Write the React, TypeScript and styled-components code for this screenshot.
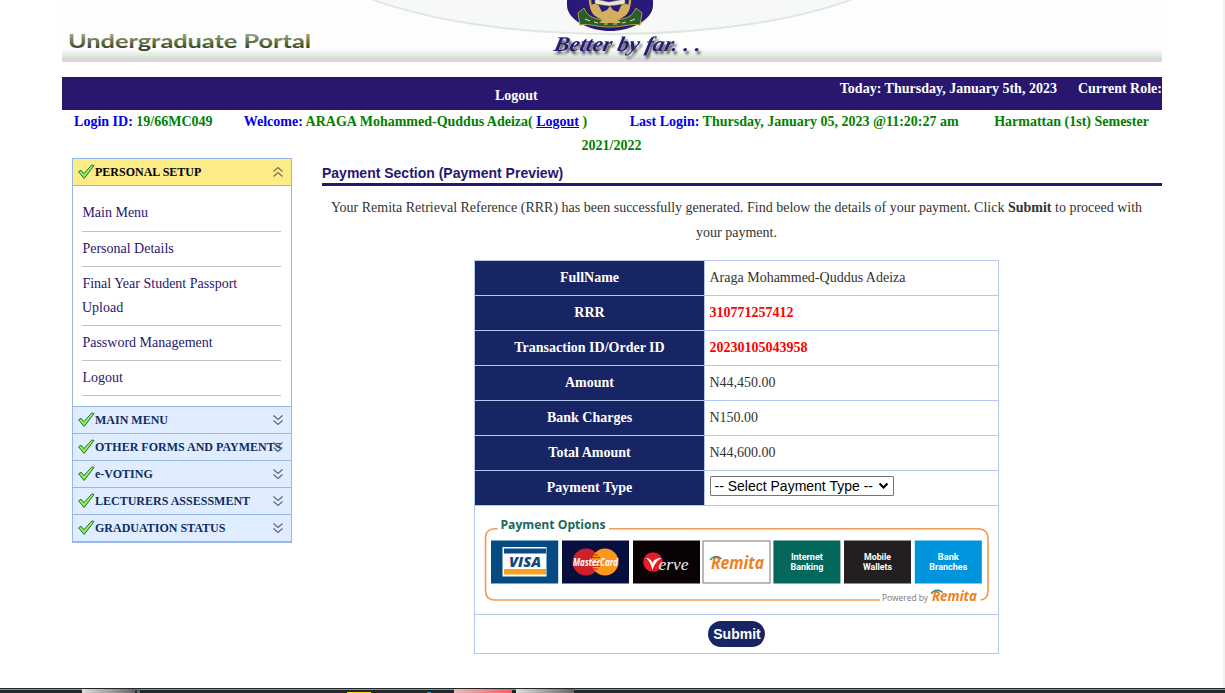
import React from "react";
import styled, { createGlobalStyle } from "styled-components";

const SERIF = '"Liberation Serif", "Times New Roman", serif';
const SANS = '"Liberation Sans", Arial, sans-serif';

const Global = createGlobalStyle`
  * { box-sizing: border-box; }
  html, body { margin: 0; padding: 0; background: #fff; overflow: hidden; }
  body { font-family: ${SERIF}; font-size: 14px; line-height: 24px; color: #333; }
`;

const Page = styled.div`
  display: flex;
  flex-direction: column;
  height: 693px;
  overflow: hidden;
`;
const Viewport = styled.div`
  display: flex;
  height: 688px;
  justify-content: space-between;
  padding-left: 62px;
`;
const ScrollTrack = styled.div`
  width: 2px;
  background: #f1f1f1;
`;
const Shell = styled.div`
  width: 1100px;
`;
const Banner = styled.header`
  height: 62px;
  border-bottom: 2px solid #e8cfe6;
  svg { display: block; }
`;
const Nav = styled.nav`
  display: flex;
  justify-content: space-between;
  margin-top: 15px;
  height: 33px;
  background: #28166f;
  color: #fff;
  font-weight: bold;
  white-space: nowrap;
`;
const NavLink = styled.a`
  margin-left: 433px;
  padding-top: 7px;
`;
const NavInfo = styled.div`
  display: flex;
  gap: 21px;
  line-height: 23px;
`;
const Session = styled.div`
  padding-right: 1px;
  text-align: center;
  font-weight: bold;
  color: #008000;
  height: 48px;
`;
const Entry = styled.span<{ $gap?: number }>`
  margin-right: ${(p) => p.$gap ?? 0}px;
`;
const Label = styled.span`
  color: #0000f0;
`;
const InlineLink = styled.a`
  color: #0000e0;
  text-decoration: underline;
`;
const Columns = styled.div`
  display: flex;
  justify-content: space-between;
  padding-left: 10px;
`;
const Sidebar = styled.aside`
  width: 220px;
  height: 385px;
  border: 1px solid #95b8e7;
  border-bottom-width: 2px;
`;
const PanelHead = styled.div<{ $open?: boolean }>`
  display: flex;
  align-items: center;
  justify-content: space-between;
  height: ${(p) => (p.$open ? 26 : 27)}px;
  padding: 0 7px 0 5px;
  background: ${(p) => (p.$open ? "#fbec88" : "#e0ecff")};
  color: ${(p) => (p.$open ? "#000" : "#0e2d5f")};
  border-top: ${(p) => (p.$open ? 0 : 1)}px solid #95b8e7;
  font-size: 12px;
  font-weight: bold;
  line-height: 16px;
  white-space: nowrap;
`;
const HeadLabel = styled.span`
  display: flex;
  align-items: center;
  width: 193px;
`;
const Icon = styled.svg`
  flex: none;
`;
const PanelBody = styled.div`
  height: 221px;
  border-top: 1px solid #95b8e7;
  padding: 9px 10px 0 9px;
`;
const MenuItem = styled.a`
  display: block;
  padding: 5px 0 5px;
  border-bottom: 1px solid #c0c0c0;
  color: #28166f;
  text-indent: 0.4px;
  &:first-child { padding: 6px 0 6px; }
`;
const Main = styled.main`
  width: 840px;
`;
const Title = styled.h1`
  margin: 0;
  padding-top: 3px;
  height: 28px;
  border-bottom: 3px solid #28166f;
  color: #28166f;
  font: bold 14px/24px ${SANS};
`;
const Notice = styled.p`
  margin: 9px 0 15px;
  padding: 0 11px 0 0;
  text-align: center;
  line-height: 25px;
`;
const Details = styled.div`
  width: 525px;
  margin-left: 152px;
  border: 1px solid #b3c6f2;
`;
const Row = styled.div`
  display: flex;
  height: 35px;
  border-bottom: 1px solid #b3c6f2;
`;
const RowHead = styled.div`
  width: 230px;
  border-right: 1px solid #b3c6f2;
  background: #182564;
  color: #fff;
  font-weight: bold;
  text-align: center;
  line-height: 33px;
`;
const RowValue = styled.div<{ $red?: boolean }>`
  padding-left: 4.5px;
  line-height: 33px;
  color: ${(p) => (p.$red ? "#f00" : "#333")};
  font-weight: ${(p) => (p.$red ? "bold" : "normal")};
`;
const Select = styled.div`
  display: flex;
  align-items: center;
  justify-content: space-between;
  width: 184px;
  height: 20px;
  margin-top: 5px;
  padding: 0 4px;
  border: 1px solid #767676;
  border-radius: 1px;
  color: #000;
  font: 14px/18px ${SANS};
  white-space: nowrap;
`;
const Options = styled.div`
  height: 109px;
  border-bottom: 1px solid #b3c6f2;
  svg { display: block; }
`;
const Actions = styled.div`
  display: flex;
  height: 38px;
  padding-top: 6px;
  justify-content: center;
`;
const Submit = styled.button`
  width: 57px;
  height: 26px;
  padding: 0 0 0 1px;
  border: 0;
  border-radius: 13px;
  background: #182564;
  color: #fff;
  font: bold 14px ${SANS};
`;
const Taskbar = styled.footer`
  height: 5px;
  svg { display: block; }
`;

const Check = () => (
  <Icon width="17" height="16" viewBox="0 0 17 16">
    <path d="M.5 7.8 3 6.2l3 3.400L13.900.9l2.100.6L6.200 14.500z" fill="#74e648" stroke="#2c7440" strokeWidth="1" strokeLinejoin="round" />
    <path d="M2.200 7.900 6 11.800 14 2.300" fill="none" stroke="#b4f58c" strokeWidth="1" />
  </Icon>
);

const Arrow = ({ up }: { up?: boolean }) => (
  <Icon width="12" height="12" viewBox="0 0 12 12">
    <path
      d={up ? "M1.500 5.500 6 1.500l4.500 4M1.500 10.500l4.500-4 4.500 4" : "M1.500 1.500l4.500 4 4.500-4M1.500 6.500l4.500 4 4.500-4"}
      fill="none"
      stroke={up ? "#76724f" : "#626a7a"}
      strokeWidth="1.3"
    />
  </Icon>
);

const BannerArt = () => (
  <svg width="1100" height="60" viewBox="62 0 1100 60" overflow="visible">
    <defs>
      <linearGradient id="fade" x1="0" y1="0" x2="0" y2="1">
        <stop offset="0" stopColor="#fdfefd" />
        <stop offset="1" stopColor="#cbdacb" />
      </linearGradient>
      <linearGradient id="olive" x1="0" y1="0" x2="0" y2="1">
        <stop offset="0.25" stopColor="#95a57a" />
        <stop offset="0.85" stopColor="#33421c" />
      </linearGradient>
      <filter id="soft" x="-10%" y="-30%" width="120%" height="190%">
        <feDropShadow dx="2" dy="3" stdDeviation="1.1" floodColor="#222" floodOpacity="0.75" />
      </filter>
    </defs>
    <rect x="62" y="0" width="1100" height="60" fill="#fdfdfd" />
    <rect x="62" y="49" width="1100" height="11" fill="url(#fade)" />
    <path d="M371 -1C425 19 510 34 612 34S800 19 853 -1Z" fill="#f6f9f8" />
    <path d="M371 -1C425 19 510 34 612 34S800 19 853 -1" fill="none" stroke="#dce9de" strokeWidth="1.8" />
    <text x="68" y="48" fontFamily="Lato, sans-serif" fontWeight="700" fontSize="19.5" fill="url(#olive)" textLength="243" lengthAdjust="spacingAndGlyphs">Undergraduate Portal</text>
    <path d="M567 -4h86v9c0 16-24 26-43 26S567 21 567 5z" fill="#2a1a78" />
    <circle cx="610" cy="0" r="20" fill="none" stroke="#c9a655" strokeWidth="2.500" />
    <path d="M584 8c4 9 10 12 26 12s22-3 26-12l6 5-2 12c-8-2-16 2-30 2s-22-4-30-2l-2-12z" fill="#265f2b" stroke="#b99a48" strokeWidth="1" />
    <path d="M590 7c2-4 7-4 9-1l3 6 5-2 3-4 3 4 5 2 3-6c2-3 7-3 9 1-1 6-5 11-13 12l4 4h-22l4-4c-8-1-12-6-13-12z" fill="#d2b05f" />
    <path d="M595-1 609 2l16-3v5l-16 2-14-2z" fill="#e8e5dd" stroke="#7d6a35" strokeWidth=".6" />
    <path d="m585 19 5 2m4 1 4 1m6 1h4m5 0h4m5-1 4-1m4-1 5-2" stroke="#e0cf83" strokeWidth="1.200" />
    <g filter="url(#soft)">
      <text transform="translate(553 51) skewX(-12)" fontFamily={SERIF} fontStyle="italic" fontWeight="700" fontSize="21" fill="#281c78" textLength="147" lengthAdjust="spacingAndGlyphs">Better by far. . .</text>
    </g>
  </svg>
);

const OPTION = '"Open Sans", sans-serif';

const Remita = ({ x, y, w, size }: { x: number; y: number; w: number; size: number }) => (
  <g>
    <text x={x} y={y} fontFamily={OPTION} fontStyle="italic" fontWeight="700" fontSize={size} fill="#ee7f22" textLength={w} lengthAdjust="spacingAndGlyphs">Remita</text>
    <path d={`M${x - 1} ${y - size * 0.52}q3-4 7-3.400 2.600.4 4.500 2.200`} fill="none" stroke="#3b8f83" strokeWidth="1.500" />
  </g>
);

const tiles = [
  { x: 773.4, fill: "#03675c", a: "Internet", b: "Banking", wa: 32, wb: 33 },
  { x: 844, fill: "#231f20", a: "Mobile", b: "Wallets", wa: 27, wb: 29 },
  { x: 914.8, fill: "#0094dd", a: "Bank", b: "Branches", wa: 21, wb: 38 },
];

const PaymentArt = () => (
  <svg width="523" height="108" viewBox="475 506 523 108">
    <path d="M497.500 528.700H494q-8.500 1-8.500 9v53q0 9.300 9.500 9.300H880M609 528.700H979q9 1 9 9.500v52q0 9-7.500 9.800" fill="none" stroke="#f19a55" strokeWidth="1.600" />
    <text x="500.500" y="529.300" fontFamily={OPTION} fontWeight="700" fontSize="12" fill="#1b675d" textLength="105" lengthAdjust="spacingAndGlyphs">Payment Options</text>
    <rect x="491" y="540.500" width="67.200" height="43" fill="#034b80" />
    <rect x="502.500" y="547" width="44" height="29.500" fill="#fff" />
    <rect x="504" y="548.500" width="42" height="5" fill="#0b4a82" />
    <rect x="504" y="569" width="42" height="5.500" fill="#f9a01f" />
    <text x="509" y="567" fontFamily={OPTION} fontStyle="italic" fontWeight="800" fontSize="14" fill="#12467d" textLength="32" lengthAdjust="spacingAndGlyphs">VISA</text>
    <rect x="562" y="540.500" width="67" height="43" fill="#070f3e" />
    <circle cx="586" cy="562" r="13.500" fill="#d0202b" />
    <circle cx="605" cy="562" r="13.500" fill="#f9981d" />
    <path d="M592 555h6m-6 2.500h8m-8 3h8m-8 3h8m-8 3h8m-8 2.500h6" stroke="#d0202b" strokeWidth="1.200" />
    <text x="573" y="566" fontFamily={OPTION} fontStyle="italic" fontWeight="700" fontSize="10" fill="#fff" textLength="45" lengthAdjust="spacingAndGlyphs">MasterCard</text>
    <rect x="633" y="540.500" width="67" height="43" fill="#0a0305" />
    <circle cx="653" cy="562" r="9.800" fill="#e81c26" />
    <path d="M646 558c3 2 5 6 6.500 12 2-6 4-9 9-12-5 0-8 2-9 5-1-3-3-5-6.500-5z" fill="#fff" />
    <text x="658.500" y="570" fontFamily={SERIF} fontStyle="italic" fontSize="17" fill="#eee" textLength="30" lengthAdjust="spacingAndGlyphs">erve</text>
    <rect x="703" y="541" width="67" height="42" fill="#fff" stroke="#777" />
    <Remita x={711} y={569} w={53} size={17} />
    {tiles.map((t) => (
      <g key={t.a} fontFamily="Roboto, sans-serif" fontWeight="700" fontSize="9.5" fill="#fff" textAnchor="middle">
        <rect x={t.x} y="540.500" width="67" height="43" fill={t.fill} />
        <text x={t.x + 33.5} y="559.500" textLength={t.wa} lengthAdjust="spacingAndGlyphs">{t.a}</text>
        <text x={t.x + 33.5} y="570" textLength={t.wb} lengthAdjust="spacingAndGlyphs">{t.b}</text>
      </g>
    ))}
    <text x="882" y="601" fontFamily={OPTION} fontSize="9" fill="#777" textLength="46" lengthAdjust="spacingAndGlyphs">Powered by</text>
    <Remita x={932} y={601} w={45} size={14} />
  </svg>
);

const menu = ["Main Menu", "Personal Details", "Final Year Student Passport Upload", "Password Management", "Logout"];
const closed = ["MAIN MENU", "OTHER FORMS AND PAYMENTS", "e-VOTING", "LECTURERS ASSESSMENT", "GRADUATION STATUS"];
const rows: { head: string; value: string; red?: boolean }[] = [
  { head: "FullName", value: "Araga Mohammed-Quddus Adeiza" },
  { head: "RRR", value: "310771257412", red: true },
  { head: "Transaction ID/Order ID", value: "20230105043958", red: true },
  { head: "Amount", value: "N44,450.00" },
  { head: "Bank Charges", value: "N150.00" },
  { head: "Total Amount", value: "N44,600.00" },
];

export default function App() {
  return (
    <Page>
      <Global />
      <Viewport>
        <Shell>
          <Banner><BannerArt /></Banner>
          <Nav>
            <NavLink>Logout</NavLink>
            <NavInfo>
              <span>Today: Thursday, January 5th, 2023</span>
              <span>Current Role:</span>
            </NavInfo>
          </Nav>
          <Session>
            <Entry $gap={28}><Label>Login ID:</Label> 19/66MC049</Entry>{" "}
            <Entry $gap={39}><Label>Welcome:</Label> ARAGA Mohammed-Quddus Adeiza( <InlineLink>Logout</InlineLink> )</Entry>{" "}
            <Entry $gap={32}><Label>Last Login:</Label> Thursday, January 05, 2023 @11:20:27 am</Entry>{" "}
            <Entry>Harmattan (1st) Semester 2021/2022</Entry>
          </Session>
          <Columns>
            <Sidebar>
              <PanelHead $open><HeadLabel><Check />PERSONAL SETUP</HeadLabel><Arrow up /></PanelHead>
              <PanelBody>
                {menu.map((m) => <MenuItem key={m}>{m}</MenuItem>)}
              </PanelBody>
              {closed.map((c) => (
                <PanelHead key={c}><HeadLabel><Check />{c}</HeadLabel><Arrow /></PanelHead>
              ))}
            </Sidebar>
            <Main>
              <Title>Payment Section (Payment Preview)</Title>
              <Notice>
                Your Remita Retrieval Reference (RRR) has been successfully generated. Find below the details of your payment. Click <b>Submit</b> to proceed with your payment.
              </Notice>
              <Details>
                {rows.map((r) => (
                  <Row key={r.head}>
                    <RowHead>{r.head}</RowHead>
                    <RowValue $red={r.red}>{r.value}</RowValue>
                  </Row>
                ))}
                <Row>
                  <RowHead>Payment Type</RowHead>
                  <RowValue>
                    <Select>
                      -- Select Payment Type --
                      <Icon width="11" height="8" viewBox="0 0 11 8"><path d="M1.500 1.500l4 4 4-4" fill="none" stroke="#000" strokeWidth="2" /></Icon>
                    </Select>
                  </RowValue>
                </Row>
                <Options><PaymentArt /></Options>
                <Actions><Submit>Submit</Submit></Actions>
              </Details>
            </Main>
          </Columns>
        </Shell>
        <ScrollTrack />
      </Viewport>
      <Taskbar>
        <svg width="1225" height="5" viewBox="0 0 1225 5">
          <defs>
            <linearGradient id="gray"><stop offset="0" stopColor="#ddd" /><stop offset="1" stopColor="#666" /></linearGradient>
            <linearGradient id="red"><stop offset="0" stopColor="#f0b5b5" /><stop offset="1" stopColor="#ec6060" /></linearGradient>
          </defs>
          <rect width="1225" height="5" fill="#20282b" />
          <rect y="1" width="1225" height="1" fill="#8b9494" />
          <rect x="82" y="1" width="53" height="4" fill="url(#gray)" />
          <rect x="137" y="1" width="3" height="4" fill="#666" />
          <rect x="347" y="4" width="24" height="1" fill="#ffd800" />
          <rect x="427" y="4" width="4" height="1" fill="#2b9bd8" />
          <rect x="454" y="1" width="58" height="4" fill="url(#red)" />
          <rect x="516" y="1" width="58" height="4" fill="url(#gray)" />
        </svg>
      </Taskbar>
    </Page>
  );
}
